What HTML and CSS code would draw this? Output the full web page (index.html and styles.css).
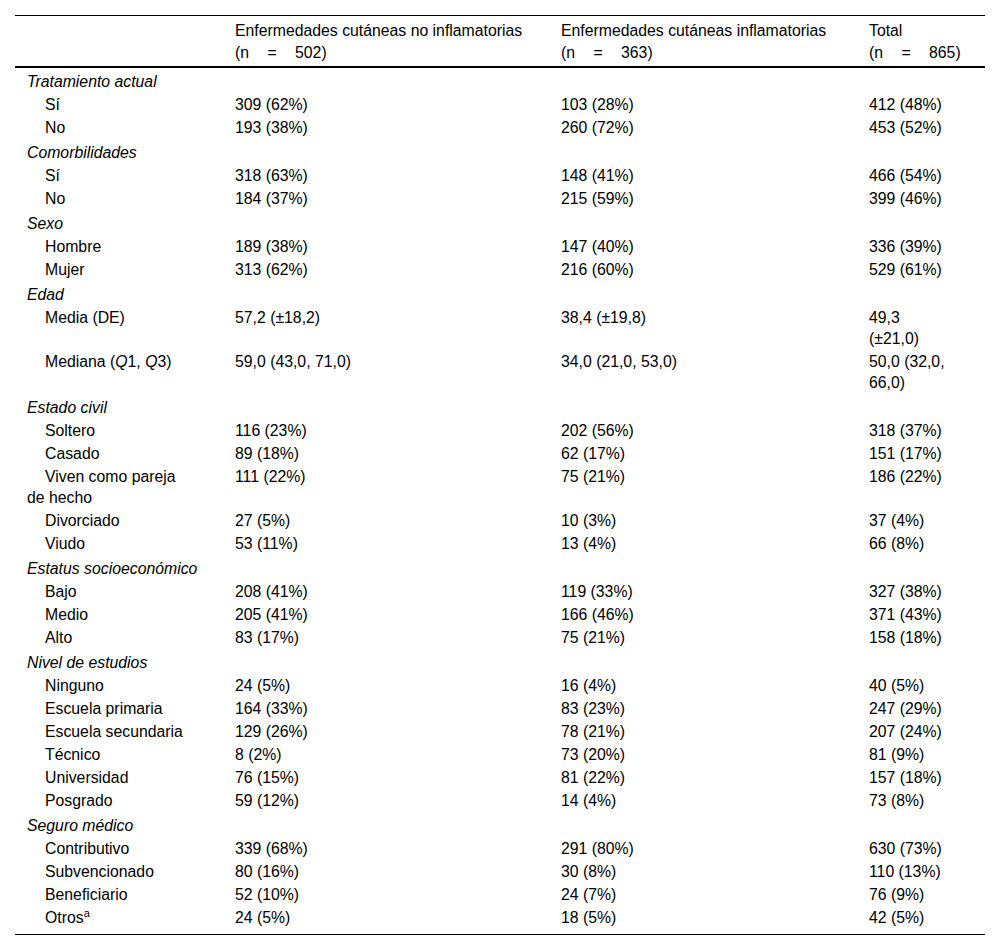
FILE: index.html
```html
<!DOCTYPE html>
<html lang="es">
<head>
<meta charset="utf-8">
<title>Tabla</title>
<link rel="stylesheet" href="styles.css">
</head>
<body>
<div class="wrap">
<table class="data">
  <colgroup>
    <col class="c1"><col class="c2"><col class="c3"><col class="c4">
  </colgroup>
  <thead>
    <tr>
      <th></th>
      <th>Enfermedades cutáneas no inflamatorias<br><span class="n">(n = 502)</span></th>
      <th>Enfermedades cutáneas inflamatorias<br><span class="n">(n = 363)</span></th>
      <th class="last">Total<br><span class="n">(n = 865)</span></th>
    </tr>
  </thead>
  <tbody>
    <tr class="grp first"><td colspan="4">Tratamiento actual</td></tr>
    <tr><td class="lbl">Sí</td><td>309 (62%)</td><td>103 (28%)</td><td class="last">412 (48%)</td></tr>
    <tr><td class="lbl">No</td><td>193 (38%)</td><td>260 (72%)</td><td class="last">453 (52%)</td></tr>
    <tr class="grp"><td colspan="4">Comorbilidades</td></tr>
    <tr><td class="lbl">Sí</td><td>318 (63%)</td><td>148 (41%)</td><td class="last">466 (54%)</td></tr>
    <tr><td class="lbl">No</td><td>184 (37%)</td><td>215 (59%)</td><td class="last">399 (46%)</td></tr>
    <tr class="grp"><td colspan="4">Sexo</td></tr>
    <tr><td class="lbl">Hombre</td><td>189 (38%)</td><td>147 (40%)</td><td class="last">336 (39%)</td></tr>
    <tr><td class="lbl">Mujer</td><td>313 (62%)</td><td>216 (60%)</td><td class="last">529 (61%)</td></tr>
    <tr class="grp"><td colspan="4">Edad</td></tr>
    <tr><td class="lbl">Media (DE)</td><td>57,2 (±18,2)</td><td>38,4 (±19,8)</td><td class="last">49,3 (±21,0)</td></tr>
    <tr><td class="lbl">Mediana (<i>Q</i>1, <i>Q</i>3)</td><td>59,0 (43,0, 71,0)</td><td>34,0 (21,0, 53,0)</td><td class="last">50,0 (32,0, 66,0)</td></tr>
    <tr class="grp"><td colspan="4">Estado civil</td></tr>
    <tr><td class="lbl">Soltero</td><td>116 (23%)</td><td>202 (56%)</td><td class="last">318 (37%)</td></tr>
    <tr><td class="lbl">Casado</td><td>89 (18%)</td><td>62 (17%)</td><td class="last">151 (17%)</td></tr>
    <tr><td class="lbl">Viven como pareja de hecho</td><td>111 (22%)</td><td>75 (21%)</td><td class="last">186 (22%)</td></tr>
    <tr><td class="lbl">Divorciado</td><td>27 (5%)</td><td>10 (3%)</td><td class="last">37 (4%)</td></tr>
    <tr><td class="lbl">Viudo</td><td>53 (11%)</td><td>13 (4%)</td><td class="last">66 (8%)</td></tr>
    <tr class="grp"><td colspan="4">Estatus socioeconómico</td></tr>
    <tr><td class="lbl">Bajo</td><td>208 (41%)</td><td>119 (33%)</td><td class="last">327 (38%)</td></tr>
    <tr><td class="lbl">Medio</td><td>205 (41%)</td><td>166 (46%)</td><td class="last">371 (43%)</td></tr>
    <tr><td class="lbl">Alto</td><td>83 (17%)</td><td>75 (21%)</td><td class="last">158 (18%)</td></tr>
    <tr class="grp"><td colspan="4">Nivel de estudios</td></tr>
    <tr><td class="lbl">Ninguno</td><td>24 (5%)</td><td>16 (4%)</td><td class="last">40 (5%)</td></tr>
    <tr><td class="lbl">Escuela primaria</td><td>164 (33%)</td><td>83 (23%)</td><td class="last">247 (29%)</td></tr>
    <tr><td class="lbl">Escuela secundaria</td><td>129 (26%)</td><td>78 (21%)</td><td class="last">207 (24%)</td></tr>
    <tr><td class="lbl">Técnico</td><td>8 (2%)</td><td>73 (20%)</td><td class="last">81 (9%)</td></tr>
    <tr><td class="lbl">Universidad</td><td>76 (15%)</td><td>81 (22%)</td><td class="last">157 (18%)</td></tr>
    <tr><td class="lbl">Posgrado</td><td>59 (12%)</td><td>14 (4%)</td><td class="last">73 (8%)</td></tr>
    <tr class="grp"><td colspan="4">Seguro médico</td></tr>
    <tr><td class="lbl">Contributivo</td><td>339 (68%)</td><td>291 (80%)</td><td class="last">630 (73%)</td></tr>
    <tr><td class="lbl">Subvencionado</td><td>80 (16%)</td><td>30 (8%)</td><td class="last">110 (13%)</td></tr>
    <tr><td class="lbl">Beneficiario</td><td>52 (10%)</td><td>24 (7%)</td><td class="last">76 (9%)</td></tr>
    <tr class="end"><td class="lbl">Otros<sup>a</sup></td><td>24 (5%)</td><td>18 (5%)</td><td class="last">42 (5%)</td></tr>
  </tbody>
</table>
</div>
</body>
</html>
```
FILE: styles.css
```css
html, body {
  margin: 0;
  padding: 0;
  background: #fff;
}
.wrap {
  padding: 15px 15px 0 15px;
}
.data {
  width: 970px;
  table-layout: fixed;
  border-collapse: collapse;
  font-family: "Liberation Sans", Arial, sans-serif;
  font-size: 15.8px;
  color: #000;
}
.c1 { width: 208px; }
.c2 { width: 326px; }
.c3 { width: 308px; }
.c4 { width: 128px; }
.data th {
  font-weight: normal;
  text-align: left;
  vertical-align: top;
  white-space: nowrap;
  line-height: 22px;
  padding: 4px 8px 2px 12px;
  border-top: 1px solid #000;
  border-bottom: 2px solid #000;
}
.data .n {
  word-spacing: 14px;
}
.data td {
  text-align: left;
  vertical-align: top;
  line-height: 21px;
  padding: 2px 8px 0 12px;
}
.data td.lbl {
  padding-left: 12px;
  padding-right: 34px;
  text-indent: 18px;
}
.data td.last,
.data th.last {
  padding-right: 36px;
}
.data tr.grp td {
  font-style: italic;
  padding-top: 4px;
}
.data tr.grp.first td {
  padding-top: 3px;
}
.data tr.end td {
  border-bottom: 1px solid #000;
  padding-bottom: 6px;
}
sup {
  font-size: 11px;
  line-height: 0;
  vertical-align: 6px;
}
```
